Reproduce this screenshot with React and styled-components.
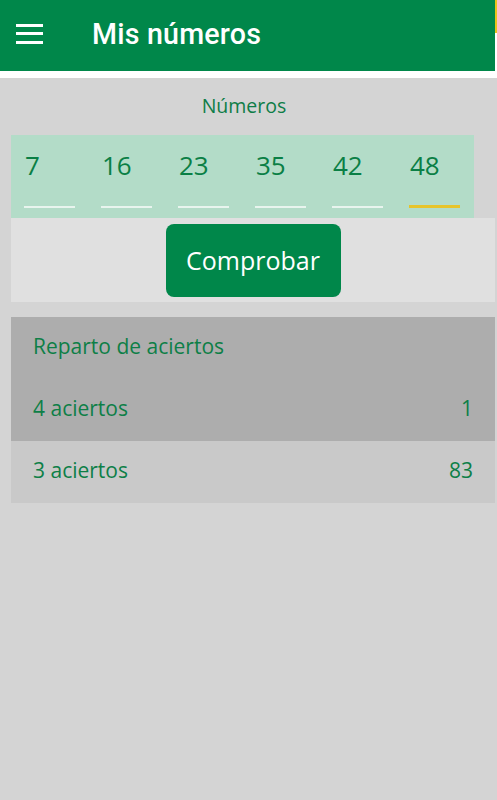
import React from "react";
import styled, { createGlobalStyle } from "styled-components";

const GlobalStyle = createGlobalStyle`
  html, body {
    margin: 0;
    padding: 0;
    background: #d4d4d4;
    font-family: 'Open Sans', 'Noto Sans', sans-serif;
  }
  * { box-sizing: border-box; }
`

const Page = styled.div`
  width: 497px;
  min-height: 800px;
  display: flex;
  flex-direction: column;
`

const TopRow = styled.div`
  display: flex;
  height: 78px;
  background: #ffffff;
`

const AppBar = styled.header`
  flex: 1;
  height: 71px;
  background: #00874a;
  display: flex;
  align-items: center;
  padding-left: 16px;
`

const Edge = styled.div`
  width: 2px;
  background: linear-gradient(#e8c41c 0, #e8c41c 33px, #ffffff 33px);
`

const Burger = styled.button`
  width: 27px;
  height: 20px;
  padding: 0;
  border: none;
  background: none;
  display: flex;
  flex-direction: column;
  justify-content: space-between;
  margin-top: -4px;
  span {
    display: block;
    height: 3px;
    background: #ffffff;
  }
`

const Title = styled.h1`
  margin: 0 0 0 49px;
  font-family: 'Roboto', sans-serif;
  font-weight: 500;
  font-size: 28.6px;
  color: #ffffff;
  letter-spacing: 0.2px;
  margin-top: -3px;
`

const Body = styled.main`
  padding: 0 2px 0 11px;
  display: flex;
  flex-direction: column;
`

const Label = styled.div`
  text-align: center;
  color: #0e7d47;
  font-size: 19.5px;
  font-weight: 500;
  height: 57px;
  line-height: 56px;
  padding-right: 18px;
`

const NumberPanel = styled.div`
  width: 463px;
  height: 83px;
  background: #b3dcc8;
  display: grid;
  grid-template-columns: repeat(6, 51px);
  column-gap: 26px;
  padding: 13px 0 0 13px;
`

const NumberCell = styled.div`
  display: flex;
  flex-direction: column;
`

const NumberValue = styled.span`
  font-size: 26px;
  font-weight: 500;
  color: #0a7f45;
  line-height: 34px;
  padding-left: 1px;
`

const Underline = styled.span`
  margin-top: ${p => (p.$active ? 23 : 24)}px;
  height: ${p => (p.$active ? 3 : 2)}px;
  background: ${p => (p.$active ? "#e6c42a" : "#e8f4ee")};
`

const ActionBar = styled.div`
  height: 84px;
  background: #e0e0e0;
  display: flex;
  justify-content: center;
  align-items: flex-start;
  padding-top: 6px;
`

const CheckButton = styled.button`
  width: 175px;
  height: 73px;
  border: none;
  border-radius: 8px;
  background: #00874a;
  color: #ffffff;
  font-family: 'Open Sans', sans-serif;
  font-size: 25px;
  font-weight: 500;
  padding: 0 0 2px;
`

const Table = styled.section`
  margin-top: 15px;
`

const Row = styled.div`
  height: 62px;
  display: flex;
  justify-content: space-between;
  align-items: center;
  padding: 0 22px 5px 22px;
  background: ${p => (p.$light ? "#c9c9c9" : "#adadad")};
  color: #0d7f47;
  font-size: 21px;
  font-weight: 500;
`

const results = [
  { label: "4 aciertos", count: 1 },
  { label: "3 aciertos", count: 83 },
]

const numbers = [7, 16, 23, 35, 42, 48]

export default function App() {
  return (
    <Page>
      <GlobalStyle />
      <TopRow>
        <AppBar>
          <Burger aria-label="menu">
            <span />
            <span />
            <span />
          </Burger>
          <Title>Mis números</Title>
        </AppBar>
        <Edge />
      </TopRow>
      <Body>
        <Label>Números</Label>
        <NumberPanel>
          {numbers.map((n, i) => (
            <NumberCell key={n}>
              <NumberValue>{n}</NumberValue>
              <Underline $active={i === numbers.length - 1} />
            </NumberCell>
          ))}
        </NumberPanel>
        <ActionBar>
          <CheckButton>Comprobar</CheckButton>
        </ActionBar>
        <Table>
          <Row>Reparto de aciertos</Row>
          {results.map((r, i) => (
            <Row key={r.label} $light={i === 1}>
              <span>{r.label}</span>
              <span>{r.count}</span>
            </Row>
          ))}
        </Table>
      </Body>
    </Page>
  );
}
